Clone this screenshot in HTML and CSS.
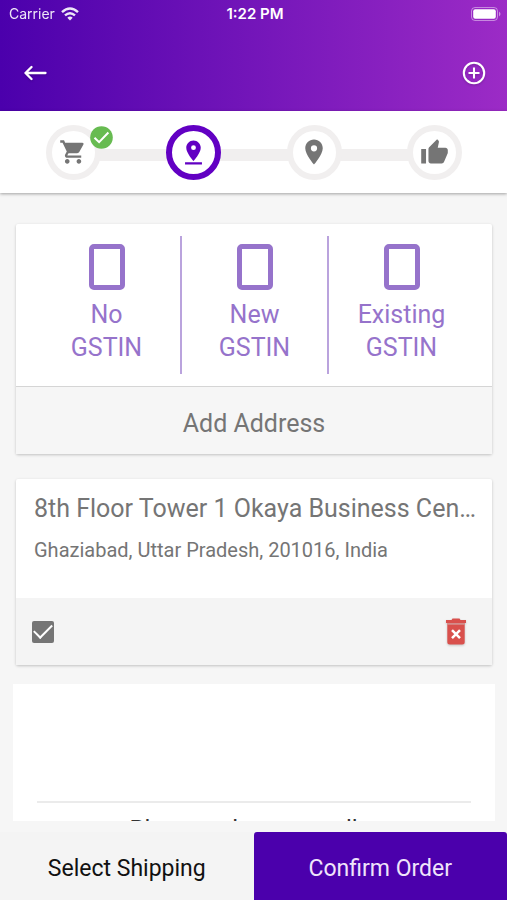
FILE: index.html
```html
<!DOCTYPE html>
<html lang="en">
<head>
<meta charset="utf-8">
<meta name="viewport" content="width=device-width, initial-scale=1">
<title>Checkout address</title>
<link rel="stylesheet" href="styles.css">
</head>
<body>
<header class="header">
  <div class="status">
    <div class="carrier">
      <span>Carrier</span>
      <svg width="18" height="14" viewBox="0 0 18 14" fill="none" stroke="#fff" stroke-width="2.4"><path d="M1 5.2Q9-2.2 17 5.2M4 8.4Q9 3.9 14 8.4"/><path d="M9 13.4 6.3 10.7Q9 8.5 11.700 10.700Z" fill="#fff" stroke="none"/></svg>
    </div>
    <span class="time">1:22 PM</span>
    <svg class="battery" width="30" height="14" viewBox="0 0 30 14"><rect x=".5" y=".5" width="26" height="13" rx="3.500" fill="none" stroke="#fff" stroke-opacity=".45"/><rect x="2.200" y="2.200" width="22.600" height="9.600" rx="2" fill="#fff"/><path d="M28 4.500q3 2.500 0 5z" fill="#fff" fill-opacity=".5"/></svg>
  </div>
  <nav class="toolbar">
    <button class="icon-button" type="button" aria-label="Back"><svg width="24" height="16" viewBox="0 0 24 16" fill="none" stroke="#fff" stroke-width="2.300" stroke-linecap="round" stroke-linejoin="round"><path d="M21.500 8H1.500M7.500 2 1.500 8l6 6"/></svg></button>
    <button class="icon-button" type="button" aria-label="Add"><svg width="24" height="24" viewBox="0 0 24 24" fill="none" stroke="#fff" stroke-width="2.100"><circle cx="12" cy="12" r="10.200"/><path d="M12 6.500v11M6.500 12h11"/></svg></button>
  </nav>
</header>

<div class="stepper">
  <div class="step">
    <svg width="28" height="28" viewBox="0.800 0 24 24" fill="#757575"><path d="M7 18c-1.100 0-1.990.9-1.990 2S5.900 22 7 22s2-.9 2-2-.9-2-2-2zM1 2v2h2l3.600 7.590-1.350 2.450c-.16.280-.25.610-.25.960 0 1.100.9 2 2 2h12v-2H7.420c-.14 0-.25-.11-.25-.25l.03-.12.900-1.630h7.450c.75 0 1.410-.41 1.750-1.030l3.580-6.490A1 1 0 0 0 20 4H5.210l-.94-2zm16 16c-1.100 0-1.990.9-1.990 2s.89 2 1.990 2 2-.9 2-2-.9-2-2-2z"/></svg>
    <svg class="badge" width="23" height="23" viewBox="0 0 23 23"><circle cx="11.500" cy="11.500" r="11.300" fill="#67bb51"/><path d="m4.500 11.700 4.600 4.500 9.300-9.700" fill="none" stroke="#fff" stroke-width="2"/></svg>
  </div>
  <div class="track"></div>
  <div class="step current"><svg width="29" height="29" viewBox="0 0 24 24" fill="#6200c3"><path d="M18 8c0-3.310-2.690-6-6-6S6 4.690 6 8c0 4.500 6 11 6 11s6-6.500 6-11zm-8 0a2 2 0 1 1 4 0 2 2 0 0 1-4 0zM5 20v2h14v-2z"/></svg></div>
  <div class="track"></div>
  <div class="step"><svg width="30" height="30" viewBox="0 0 24 24" fill="#757575"><path d="M12 2C8.130 2 5 5.130 5 9c0 5.250 7 13 7 13s7-7.750 7-13c0-3.870-3.130-7-7-7zm0 9.500a2.500 2.500 0 0 1 0-5 2.500 2.500 0 0 1 0 5z"/></svg></div>
  <div class="track"></div>
  <div class="step"><svg width="29" height="29" viewBox="0 0 24 24" fill="#757575"><path d="M1 21h4V9H1v12zm22-11c0-1.100-.9-2-2-2h-6.310l.95-4.570.03-.32c0-.41-.17-.79-.44-1.060L14.170 1 7.590 7.590C7.220 7.950 7 8.450 7 9v10c0 1.100.9 2 2 2h9c.83 0 1.540-.5 1.840-1.220l3.020-7.050c.09-.23.140-.47.140-.73z"/></svg></div>
</div>

<main class="content">
  <section class="card">
    <div class="options">
      <label class="option"><input type="checkbox"><span>No<br>GSTIN</span></label>
      <label class="option"><input type="checkbox"><span>New<br>GSTIN</span></label>
      <label class="option"><input type="checkbox"><span>Existing<br>GSTIN</span></label>
    </div>
    <button class="add" type="button">Add Address</button>
  </section>

  <section class="card">
    <div class="address">
      <h2>8th Floor Tower 1 Okaya Business Center</h2>
      <p>Ghaziabad, Uttar Pradesh, 201016, India</p>
    </div>
    <div class="actions">
      <input class="tick" type="checkbox" aria-label="Use this address" checked>
      <button class="icon-button" type="button" aria-label="Delete address"><svg width="22" height="27" viewBox="0 0 22 27" fill="#d9504c"><path d="M1 2h5.500l1-1.500h7L15.500 2H21v3H1z"/><path d="M2 5h18v2H2z" fill-opacity=".5"/><path d="M2.300 6.800h17.400V24q0 2.500-2.500 2.500H4.800Q2.300 26.500 2.300 24z"/><path d="m7 12.200 8 8m0-8-8 8" stroke="#fff" stroke-width="2.500"/></svg></button>
    </div>
  </section>

  <section class="seller">
    <p>Please select any seller</p>
  </section>
</main>

<footer class="footer">
  <button class="select" type="button">Select Shipping</button>
  <button class="confirm" type="button">Confirm Order</button>
</footer>
</body>
</html>
```
FILE: styles.css
```css
* {
  box-sizing: border-box;
}

body {
  margin: 0;
  height: 100vh;
  display: flex;
  flex-direction: column;
  background: #f6f6f6;
  color: #757575;
  font-family: Roboto, "Liberation Sans", sans-serif;
  font-size: 25px;
}

button {
  border: 0;
  padding: 0;
  background: none;
  color: inherit;
  font: inherit;
}

svg {
  display: block;
}

.header {
  color: #fff;
  background: linear-gradient(90deg, #4b00ac, #9c2bc6);
}

.status {
  height: 27px;
  padding: 0 6px 0 9px;
  display: grid;
  grid-template-columns: 1fr auto 1fr;
  align-items: center;
  font-family: Inter, "Liberation Sans", sans-serif;
  font-size: 14px;
}

.carrier {
  display: flex;
  align-items: center;
  gap: 6px;
  opacity: 0.9;
}

.time {
  font-size: 15px;
  font-weight: 600;
}

.battery {
  justify-self: end;
}

.toolbar {
  height: 84px;
  padding: 7px 21px 0 24px;
  display: flex;
  align-items: center;
  justify-content: space-between;
}

.icon-button svg {
  filter: drop-shadow(0 1px 1px rgba(0, 0, 0, 0.2));
}

.stepper {
  position: relative;
  height: 82px;
  padding: 0 45px 0 46px;
  display: flex;
  align-items: center;
  background: #fff;
  box-shadow: 0 1px 3px rgba(0, 0, 0, 0.35);
}

.step {
  position: relative;
  width: 55px;
  height: 55px;
  display: flex;
  align-items: center;
  justify-content: center;
  border: 6px solid #f1efef;
  border-radius: 50%;
}

.step.current {
  border-color: #6200c3;
}

.badge {
  position: absolute;
  top: -5px;
  right: -18px;
}

.track {
  flex: 1;
  height: 12px;
  margin: 6px -2px 0;
  background: #f1efef;
}

.content {
  flex: 1;
  min-height: 0;
  overflow: hidden;
  margin-bottom: 11px;
  padding: 31px 12px 0 13px;
}

.card {
  margin: 0 3px 25px;
  border-radius: 2px;
  background: #fff;
  box-shadow: 0 1px 3px rgba(0, 0, 0, 0.22);
}

.options {
  padding: 12px 18px 12px 17px;
  display: grid;
  grid-template-columns: repeat(3, 1fr);
  border-bottom: 1px solid #d5d5d5;
}

.option {
  height: 138px;
  padding-top: 8px;
  display: flex;
  flex-direction: column;
  align-items: center;
  gap: 8px;
  color: #9673cb;
  line-height: 33px;
  text-align: center;
}

.option + .option {
  border-left: 2px solid #baa3dd;
}

.option input {
  appearance: none;
  width: 36px;
  height: 46px;
  margin: 0;
  border: 5px solid #9673cb;
  border-radius: 5px;
}

.add {
  display: block;
  width: 100%;
  height: 67px;
  padding-top: 5px;
  background: #f6f6f6;
}

.address {
  height: 119px;
  padding: 13px 12px 12px 18px;
}

.address h2,
.address p {
  margin: 0;
  overflow: hidden;
  white-space: nowrap;
  text-overflow: ellipsis;
}

.address h2 {
  font-size: 25px;
  font-weight: 400;
  line-height: 34px;
}

.address p {
  margin-top: 11px;
  font-size: 20px;
  line-height: 26px;
}

.actions {
  height: 67px;
  padding: 0 25px 0 16px;
  display: flex;
  align-items: center;
  justify-content: space-between;
  background: #f4f4f4;
}

.tick {
  appearance: none;
  display: grid;
  place-items: center;
  width: 22px;
  height: 22px;
  margin: 0;
  border-radius: 2px;
  background: #757575;
}

.tick:checked::before {
  content: "";
  width: 16px;
  height: 8px;
  margin-bottom: 5px;
  border-left: 2px solid #fff;
  border-bottom: 2px solid #fff;
  rotate: -45deg;
}

.seller {
  margin-top: -6px;
  padding: 117px 24px 0;
  background: #fff;
}

.seller p {
  margin: 0;
  padding-top: 8px;
  border-top: 2px solid #ebebeb;
  color: #333;
  font-size: 24px;
  line-height: 36px;
  text-align: center;
}

.footer {
  height: 68px;
  display: grid;
  grid-template-columns: 1fr 1fr;
  font-size: 23px;
}

.select {
  padding-top: 4px;
  background: #f4f4f4;
  color: #111;
}

.confirm {
  padding-top: 4px;
  border-radius: 3px 3px 0 0;
  background: #4b00ac;
  color: #f0e4fb;
}
```
